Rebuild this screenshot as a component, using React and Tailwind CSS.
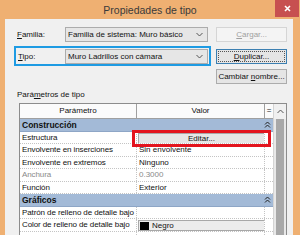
import React from "react";

// Fila de parámetros: nombre | valor | columna "="
const Row = ({ name, children, muted }) => (
  <div className="flex h-[12.5px] border-b border-dotted border-[#c4c4c4] leading-[12px]">
    <div className={`w-[117px] pl-[2px] tracking-[-0.1px] whitespace-nowrap overflow-hidden border-r border-dotted border-[#c4c4c4] ${muted ? "text-[#8a8a8a]" : ""}`}>
      {name}
    </div>
    <div className={`w-[128px] pl-[2px] whitespace-nowrap overflow-hidden border-r border-dotted border-[#c4c4c4] ${muted ? "text-[#8a8a8a]" : ""}`}>
      {children}
    </div>
    <div className="w-[8px]"></div>
  </div>
);

const Group = ({ title }) => (
  <div className="flex items-center h-[12.5px] bg-[#a3bad7] border-b border-[#8ea6c6] pl-[2px] font-bold text-[8.5px] leading-[12px]">
    <span className="flex-1">{title}</span>
    <svg width="7" height="7" viewBox="0 0 7 7" className="mr-[2px]">
      <path d="M1 3.5 L3.5 1 L6 3.5 M1 6.5 L3.5 4 L6 6.5" fill="none" stroke="#222" strokeWidth="1" />
    </svg>
  </div>
);

const Chevron = () => (
  <svg width="7" height="5" viewBox="0 0 7 5">
    <path d="M0.5 1 L3.5 4 L6.5 1" fill="none" stroke="#555" strokeWidth="1" />
  </svg>
);

const Combo = ({ text }) => (
  <div className="flex items-center w-[143px] h-[15px] bg-[#e6e6e6] border border-[#acacac] pl-[2px] pr-[4px]">
    <span className="flex-1 whitespace-nowrap overflow-hidden leading-[13px]">{text}</span>
    <Chevron />
  </div>
);

const Btn = ({ children, disabled, focused, className = "" }) => (
  <div
    className={`w-[71px] h-[15px] flex items-center justify-center leading-[13px] whitespace-nowrap border ${
      disabled
        ? "border-[#d5d5d5] bg-[#f4f4f4] text-[#a0a0a0]"
        : focused
        ? "border-[#3c7fb1] bg-[#e5e5e5] outline outline-1 outline-dotted outline-[#555] -outline-offset-[3px]"
        : "border-[#acacac] bg-[#e5e5e5]"
    } ${className}`}
  >
    {children}
  </div>
);

export default function App() {
  return (
    <div className="w-[300px] h-[235px] overflow-hidden bg-[#efb072] flex flex-col font-['Liberation_Sans'] text-[8px] text-[#111]">
      {/* barra de título */}
      <div className="h-[19px] shrink-0 flex">
        <div className="flex-1 pl-[25px] text-center text-[10.5px] leading-[21px] text-[#3a3a3a]">
          Propiedades de tipo
        </div>
        <div className="w-[24px] h-[17px] mr-[1px] bg-[#c75050] flex items-center justify-center">
          <svg width="7" height="7" viewBox="0 0 7 7">
            <path d="M1 1 L6 6 M6 1 L1 6" stroke="#fff" strokeWidth="1.6" />
          </svg>
        </div>
      </div>

      {/* contenido */}
      <div className="flex-1 ml-[5px] mr-[7px] bg-[#f0f0f0] pt-[8px] pl-[9px] pr-[6px] flex flex-col overflow-hidden">
        <div className="flex items-center h-[15px]">
          <div className="w-[197px] flex items-center">
            <span className="w-[51px] pl-[3px] leading-[13px]">
              <u>F</u>amilia:
            </span>
            <Combo text="Familia de sistema: Muro básico" />
          </div>
          <Btn disabled className="ml-[6px]">
            <span><u>C</u>argar...</span>
          </Btn>
        </div>

        <div className="flex items-center mt-[4px] h-[20px]">
          <div className="w-[197px] h-[20px] flex items-center border-2 border-[#1e9be3]">
            <span className="w-[49px] pl-[2px] leading-[13px]">
              <u>T</u>ipo:
            </span>
            <Combo text="Muro Ladrillos con cámara" />
          </div>
          <Btn focused className="ml-[5px]">
            <span><u>D</u>uplicar...</span>
          </Btn>
        </div>

        <div className="flex mt-[3px] pl-[202px]">
          <Btn>
            <span>Cambiar <u>n</u>ombre...</span>
          </Btn>
        </div>

        <div className="mt-[5px] pl-[3px] leading-[12px]">
          Pará<u>m</u>etros de tipo
        </div>

        {/* tabla de parámetros */}
        <div className="relative mt-[2px] ml-[5px] w-[268px] flex-1 flex border border-[#8c8c8c] border-b-0 bg-white">
          <div className="w-[253px] flex flex-col">
            <div className="flex h-[15px] leading-[14px] bg-[#fbfbfb] border-b border-[#a0a0a0]">
              <div className="w-[117px] text-center border-r border-[#a0a0a0]">Parámetro</div>
              <div className="w-[128px] text-center border-r border-[#a0a0a0]">Valor</div>
              <div className="w-[8px] text-center">=</div>
            </div>
            <Group title="Construcción" />
            <Row name="Estructura">
              <div className="mt-[1px] -ml-[1px] w-[127px] h-[11px] bg-[#e6e6e6] border border-[#a8a8a8] text-center leading-[9px]">
                Editar...
              </div>
            </Row>
            <Row name="Envolvente en inserciones">Sin envolvente</Row>
            <Row name="Envolvente en extremos">Ninguno</Row>
            <Row name="Anchura" muted>0.3000</Row>
            <Row name="Función">Exterior</Row>
            <Group title="Gráficos" />
            <Row name="Patrón de relleno de detalle bajo"></Row>
            <Row name="Color de relleno de detalle bajo">
              <div className="mt-[1px] -ml-[1px] w-[127px] h-[11px] flex items-center gap-[3px] bg-[#ececec] border border-[#a8a8a8] pl-[1px] leading-[9px]">
                <span className="w-[9px] h-[8px] bg-black"></span>
                Negro
              </div>
            </Row>
            <Row name=""></Row>
          </div>

          {/* barra de desplazamiento */}
          <div className="w-[13px] flex flex-col border-l border-[#d4d4d4] bg-[#e8e8e8]">
            <div className="h-[15px] flex items-center justify-center bg-[#f0f0f0]">
              <svg width="7" height="5" viewBox="0 0 7 5">
                <path d="M0.5 4 L3.5 1 L6.5 4" fill="none" stroke="#555" strokeWidth="1" />
              </svg>
            </div>
            <div className="flex-1 mx-[2px] bg-[#a8a8a8]"></div>
          </div>

          {/* resaltado rojo */}
          <div className="absolute left-[112px] top-[26px] w-[139px] h-[17px] border-[3px] border-[#e3141e]"></div>
        </div>
      </div>
    </div>
  );
}
